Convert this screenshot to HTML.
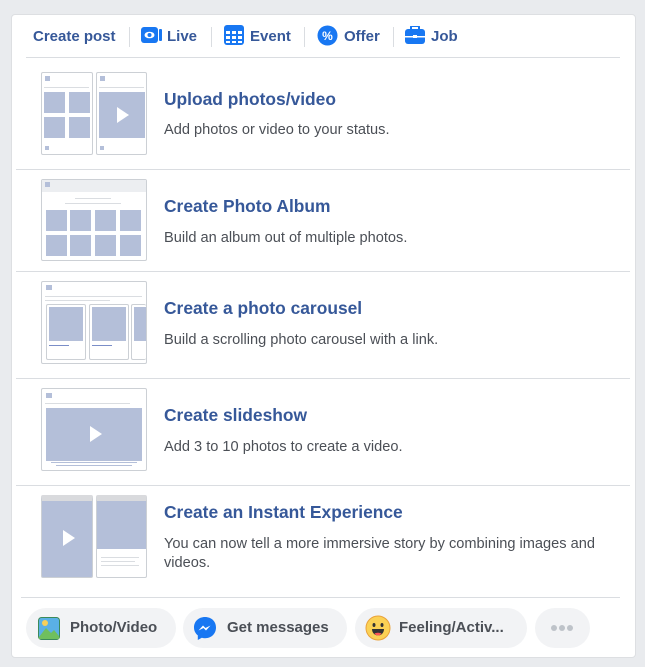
<!DOCTYPE html><html><head><style>
body{margin:0;background:#e9ebee;font-family:"Liberation Sans",sans-serif;width:645px;height:667px;position:relative;overflow:hidden}
.card{position:absolute;left:11px;top:14px;width:625px;height:644px;background:#fff;border:1px solid #dddfe2;border-radius:4px;box-sizing:border-box}
.a{position:absolute}
.nav{font-weight:bold;font-size:15px;color:#365899;top:28px}
.sep{position:absolute;width:1px;height:20px;background:#dadde1;top:27px}
.hl{position:absolute;height:1px;background:#dadde1}
.t{position:absolute;left:164px;font-weight:bold;font-size:17.4px;color:#365899}
.d{position:absolute;left:164px;font-size:14.6px;color:#4b4f56;line-height:19px}
.b{position:absolute;background:#b4bfd9}
.fr{position:absolute;border:1px solid #ccd0d5;background:#fff;border-radius:2px;box-sizing:border-box}
.btn{position:absolute;top:608px;height:40px;border-radius:20px;background:#f2f3f5;font-weight:bold;font-size:15px;color:#4b4f56;line-height:40px}
.ln{position:absolute;height:1px;background:#dadde1}
.pl{position:absolute;width:0;height:0;border-left:12px solid #fff;border-top:8px solid transparent;border-bottom:8px solid transparent}
.dot{position:absolute;top:625px;width:6px;height:6px;border-radius:3px;background:#bec3c9}
</style></head><body>
<div class="card"></div>
<div class="a nav" style="left:33px">Create post</div>
<div class="sep" style="left:129px"></div>
<svg class="a" style="left:141px;top:26px" width="22" height="19"><rect x="0" y="1" width="17" height="16" rx="3" fill="#1877f2"/><ellipse cx="8.5" cy="9" rx="5" ry="3.3" fill="#fff"/><circle cx="8.5" cy="9" r="2" fill="#1877f2"/><rect x="18" y="3" width="3" height="12" rx="1" fill="#1877f2"/></svg>
<div class="a nav" style="left:167px">Live</div>
<div class="sep" style="left:211px"></div>
<svg class="a" style="left:224px;top:25px" width="20" height="20"><rect x="0" y="0" width="20" height="20" rx="3" fill="#1877f2"/><g fill="#fff"><rect x="2" y="6" width="4" height="3"/><rect x="8" y="6" width="4" height="3"/><rect x="14" y="6" width="4" height="3"/><rect x="2" y="11" width="4" height="3"/><rect x="8" y="11" width="4" height="3"/><rect x="14" y="11" width="4" height="3"/><rect x="2" y="16" width="4" height="2"/><rect x="8" y="16" width="4" height="2"/><rect x="14" y="16" width="4" height="2"/></g></svg>
<div class="a nav" style="left:250px">Event</div>
<div class="sep" style="left:304px"></div>
<svg class="a" style="left:317px;top:25px" width="21" height="21"><circle cx="10.5" cy="10.5" r="10" fill="#1877f2"/><text x="10.5" y="15" font-size="12" font-weight="bold" fill="#fff" text-anchor="middle" font-family="Liberation Sans">%</text></svg>
<div class="a nav" style="left:344px">Offer</div>
<div class="sep" style="left:393px"></div>
<svg class="a" style="left:405px;top:26px" width="20" height="19"><rect x="6" y="0" width="8" height="4" rx="1" fill="none" stroke="#1877f2" stroke-width="2"/><rect x="0" y="3" width="20" height="15" rx="3" fill="#1877f2"/><rect x="0" y="10" width="20" height="1.5" fill="#fff"/><rect x="8" y="9" width="4" height="3" fill="#fff"/></svg>
<div class="a nav" style="left:431px">Job</div>
<div class="hl" style="left:26px;top:57px;width:594px"></div>
<div class="hl" style="left:16px;top:169px;width:614px"></div>
<div class="hl" style="left:16px;top:271px;width:614px"></div>
<div class="hl" style="left:16px;top:378px;width:614px"></div>
<div class="hl" style="left:16px;top:485px;width:614px"></div>
<div class="hl" style="left:21px;top:597px;width:599px"></div>

<!-- row1 -->
<div class="fr" style="left:41px;top:72px;width:52px;height:83px"></div>
<div class="fr" style="left:96px;top:72px;width:51px;height:83px"></div>
<div class="b" style="left:44px;top:92px;width:21px;height:21px"></div><div class="b" style="left:69px;top:92px;width:21px;height:21px"></div>
<div class="b" style="left:44px;top:117px;width:21px;height:21px"></div><div class="b" style="left:69px;top:117px;width:21px;height:21px"></div>
<div class="b" style="left:99px;top:92px;width:46px;height:46px"></div><div class="pl" style="left:117px;top:107px"></div>
<div class="b" style="left:45px;top:76px;width:5px;height:5px"></div><div class="b" style="left:100px;top:76px;width:5px;height:5px"></div>
<div class="b" style="left:45px;top:146px;width:4px;height:4px"></div><div class="b" style="left:100px;top:146px;width:4px;height:4px"></div>
<div class="ln" style="left:44px;top:87px;width:45px"></div><div class="ln" style="left:99px;top:87px;width:45px"></div>
<div class="t" style="top:89px">Upload photos/video</div>
<div class="d" style="top:121px">Add photos or video to your status.</div>

<!-- row2 -->
<div class="fr" style="left:41px;top:179px;width:106px;height:82px"></div>
<div class="ln" style="left:42px;top:180px;width:104px;height:12px;background:#eceef1"></div>
<div class="b" style="left:45px;top:182px;width:5px;height:5px"></div>
<div class="ln" style="left:75px;top:198px;width:36px"></div><div class="ln" style="left:65px;top:203px;width:56px"></div>
<div class="b" style="left:46px;top:210px;width:21px;height:21px"></div><div class="b" style="left:70px;top:210px;width:21px;height:21px"></div><div class="b" style="left:95px;top:210px;width:21px;height:21px"></div><div class="b" style="left:120px;top:210px;width:21px;height:21px"></div>
<div class="b" style="left:46px;top:235px;width:21px;height:21px"></div><div class="b" style="left:70px;top:235px;width:21px;height:21px"></div><div class="b" style="left:95px;top:235px;width:21px;height:21px"></div><div class="b" style="left:120px;top:235px;width:21px;height:21px"></div>
<div class="t" style="top:196px">Create Photo Album</div>
<div class="d" style="top:229px">Build an album out of multiple photos.</div>

<!-- row3 -->
<div class="fr" style="left:41px;top:281px;width:106px;height:83px;overflow:hidden"></div>
<div class="b" style="left:46px;top:285px;width:6px;height:5px"></div>
<div class="ln" style="left:45px;top:296px;width:97px"></div><div class="ln" style="left:45px;top:300px;width:65px"></div>
<div class="fr" style="left:46px;top:304px;width:40px;height:56px"></div><div class="b" style="left:49px;top:307px;width:34px;height:34px"></div>
<div class="fr" style="left:89px;top:304px;width:40px;height:56px"></div><div class="b" style="left:92px;top:307px;width:34px;height:34px"></div>
<div class="fr" style="left:131px;top:304px;width:15px;height:56px;border-right:0"></div><div class="b" style="left:134px;top:307px;width:12px;height:34px"></div>
<div class="b" style="left:49px;top:345px;width:20px;height:1px;background:#7b8ec8"></div><div class="b" style="left:92px;top:345px;width:20px;height:1px;background:#7b8ec8"></div>
<div class="t" style="top:298px">Create a photo carousel</div>
<div class="d" style="top:331px">Build a scrolling photo carousel with a link.</div>

<!-- row4 -->
<div class="fr" style="left:41px;top:388px;width:106px;height:83px"></div>
<div class="b" style="left:46px;top:393px;width:6px;height:5px"></div>
<div class="ln" style="left:45px;top:403px;width:85px"></div>
<div class="b" style="left:46px;top:408px;width:96px;height:53px"></div><div class="pl" style="left:90px;top:426px"></div>
<div class="b" style="left:51px;top:462px;width:86px;height:1px"></div><div class="b" style="left:56px;top:465px;width:76px;height:1px"></div>
<div class="t" style="top:405px">Create slideshow</div>
<div class="d" style="top:438px">Add 3 to 10 photos to create a video.</div>

<!-- row5 -->
<div class="fr" style="left:41px;top:495px;width:52px;height:83px;background:#b4bfd9;border-top:6px solid #d9dadd"></div><div class="pl" style="left:63px;top:530px"></div>
<div class="fr" style="left:96px;top:495px;width:51px;height:83px;border-top:6px solid #d9dadd"></div>
<div class="b" style="left:97px;top:501px;width:49px;height:48px"></div>
<div class="ln" style="left:101px;top:557px;width:38px"></div><div class="ln" style="left:101px;top:561px;width:34px"></div><div class="ln" style="left:101px;top:565px;width:38px"></div>
<div class="t" style="top:502px">Create an Instant Experience</div>
<div class="d" style="top:535px;width:455px">You can now tell a more immersive story by combining images and videos.</div>

<!-- footer -->
<div class="btn" style="left:26px;width:150px"><svg class="a" style="left:12px;top:9px" width="22" height="23"><rect x="0.5" y="0.5" width="21" height="22" rx="3" fill="#5ab0e6" stroke="#3b8a5a"/><path d="M1 20 L8 11 L13 16 L16 13 L21 19 L21 22 L1 22Z" fill="#6fbf5e"/><circle cx="7" cy="6" r="3" fill="#f7d05a"/></svg><span style="position:absolute;left:44px">Photo/Video</span></div>
<div class="btn" style="left:183px;width:164px"><svg class="a" style="left:10px;top:8px" width="24" height="25"><path d="M12 1C5.5 1 1 5.5 1 11.5c0 3.3 1.5 6 3.8 7.9V24l4-2.2c1 .3 2.1.4 3.2.4 6.5 0 11-4.6 11-10.7S18.5 1 12 1z" fill="#1877f2"/><path d="M5.5 14.5 10 9.5l2.5 2.5 5-2.5-4.5 5-2.5-2.5z" fill="#fff"/></svg><span style="position:absolute;left:44px">Get messages</span></div>
<div class="btn" style="left:355px;width:172px"><svg class="a" style="left:10px;top:7px" width="26" height="26"><circle cx="13" cy="13" r="12" fill="#fbd155" stroke="#e9a23b"/><ellipse cx="9" cy="10" rx="1.5" ry="2" fill="#333"/><ellipse cx="17" cy="10" rx="1.5" ry="2" fill="#333"/><path d="M7 14h12c0 4-3 6.5-6 6.5S7 18 7 14z" fill="#333"/><path d="M9.5 18.5c2-1 5-1 7 0-1 1.3-2.2 2-3.5 2s-2.5-.7-3.5-2z" fill="#f55"/></svg><span style="position:absolute;left:44px">Feeling/Activ...</span></div>
<div class="btn" style="left:535px;width:55px"></div>
<div class="dot" style="left:551px"></div><div class="dot" style="left:559px"></div><div class="dot" style="left:567px"></div>
</body></html>
